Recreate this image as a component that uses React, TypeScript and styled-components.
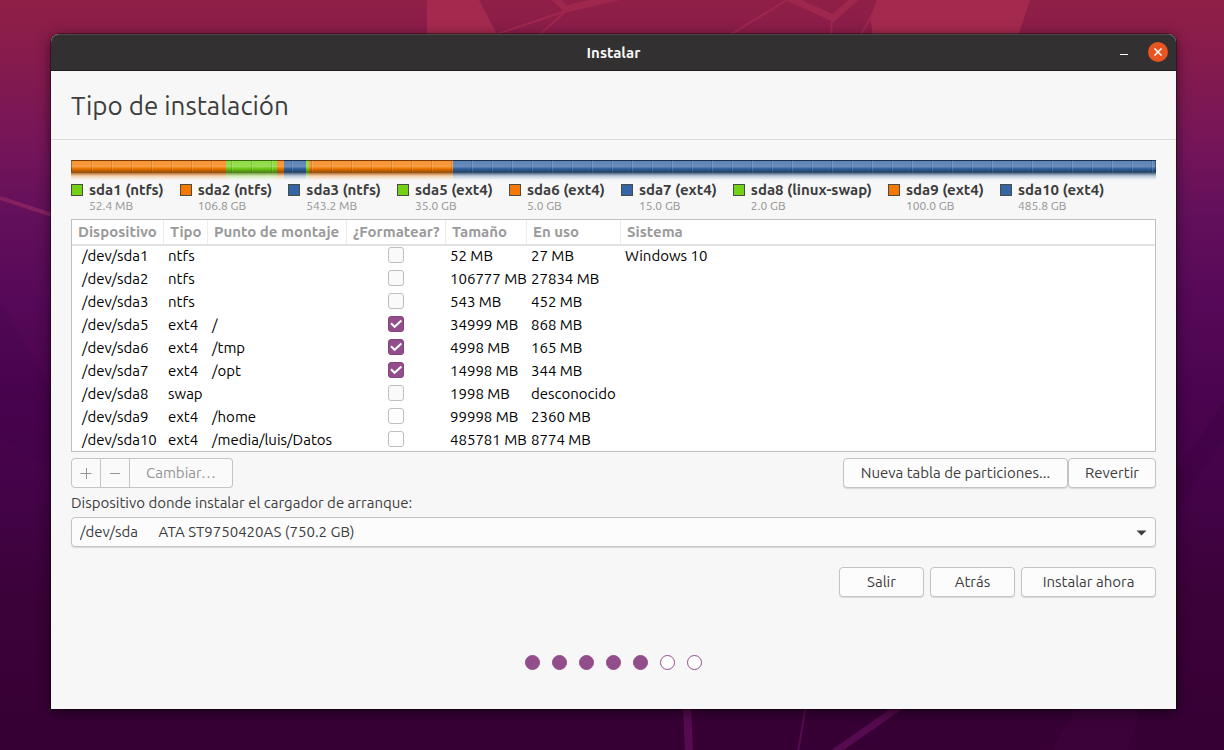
import React, { useState } from "react";
import styled, { createGlobalStyle } from "styled-components";

const ORANGE = "#f57900";
const GREEN = "#73d216";
const BLUE = "#3465a4";

const GlobalStyle = createGlobalStyle`
  *, *::before, *::after { box-sizing: border-box; }
  body {
    margin: 0;
    font-family: Ubuntu, "Noto Sans", sans-serif;
    font-size: 15px;
    line-height: 20px;
    color: #3d3d3d;
  }
  button, input, select { font: inherit; color: inherit; margin: 0; }
`;

const Desktop = styled.div`
  position: relative;
  min-height: 100vh;
  padding: 34px 48px 41px 51px;
  background: linear-gradient(
    #8f1f46 0%, #861b4d 8%, #74155a 20%, #64105b 28%, #560958 40%,
    #4b044f 53%, #430346 67%, #3b0239 80%, #360034 100%
  );
`;

const Wallpaper = styled.svg`
  position: absolute;
  inset: 0;
  width: 100%;
  height: 100%;
`;

const Window = styled.main`
  position: relative;
  display: flex;
  flex-direction: column;
  background: #f7f7f7;
  border-radius: 8px 8px 0 0;
  box-shadow: 0 0 0 1px rgba(0, 0, 0, 0.35), 0 3px 14px rgba(0, 0, 0, 0.55);
`;

const TitleBar = styled.header`
  display: grid;
  grid-template-columns: 1fr auto 1fr;
  align-items: center;
  height: 37px;
  padding: 0 8px;
  background: #323030;
  border-top: 1px solid #4c4a48;
  border-bottom: 1px solid #1d1b1b;
  border-radius: 8px 8px 0 0;
`;

const WindowTitle = styled.span`
  grid-column: 2;
  font-weight: 700;
  color: #f7f7f7;
`;

const WindowControls = styled.div`
  display: flex;
  justify-content: flex-end;
  gap: 14px;
  padding-bottom: 2px;
`;

const ControlButton = styled.button<{ $close?: boolean }>`
  display: flex;
  align-items: center;
  justify-content: center;
  width: 20px;
  height: 20px;
  padding: 0;
  border: 0;
  border-radius: 50%;
  color: #fff;
  background: ${(p) => (p.$close ? "#e95420" : "transparent")};
`;

const PageHeader = styled.div`
  padding: 19px 20px 17px;
  border-bottom: 1px solid #dcdcdc;
`;

const PageTitle = styled.h1`
  margin: 0;
  font-size: 26px;
  line-height: 32px;
  font-weight: 400;
`;

const Content = styled.div`
  display: flex;
  flex-direction: column;
  padding: 20px 20px 39px;
`;

const DiskBar = styled.div`
  position: relative;
  display: flex;
  height: 20px;
  &::after {
    content: "";
    position: absolute;
    inset: 0 0 7px;
    border: 1px solid rgba(0, 0, 0, 0.3);
    border-bottom-color: rgba(0, 0, 0, 0.4);
    background:
      repeating-linear-gradient(
        90deg, transparent 0 18px, rgba(0, 0, 0, 0.12) 18px 19px, rgba(255, 255, 255, 0.12) 19px 20px
      ) 1px 0,
      linear-gradient(
        rgba(255, 255, 255, 0.2) 0%, rgba(255, 255, 255, 0.26) 50%,
        rgba(0, 0, 0, 0.05) 70%, rgba(0, 0, 0, 0.35) 100%
      );
  }
`;

const Segment = styled.div<{ $color: string; $size: number }>`
  flex: ${(p) => p.$size} 1 0;
  background:
    linear-gradient(transparent 13px, rgba(120, 110, 100, 0.5) 13px, rgba(247, 247, 247, 0.7) 16px, #f7f7f7 20px),
    ${(p) => p.$color};
`;

const Legend = styled.ul`
  display: flex;
  gap: 16px;
  margin: 0;
  padding: 0 0 8px;
  list-style: none;
`;

const LegendItem = styled.li`
  display: grid;
  grid-template-columns: 12px auto;
  column-gap: 6px;
  align-items: center;
  white-space: nowrap;
`;

const Swatch = styled.span<{ $color: string }>`
  width: 12px;
  height: 12px;
  border: 1px solid #4a4a46;
  background: ${(p) => p.$color};
`;

const LegendName = styled.strong`
  line-height: 20px;
`;

const LegendSize = styled.small`
  grid-column: 2;
  font-size: 12px;
  line-height: 11px;
  color: #929292;
`;

const TableFrame = styled.div`
  border: 1px solid #bfbfbf;
  background: #fff;
`;

const Table = styled.table`
  width: 100%;
  table-layout: fixed;
  border-collapse: separate;
  border-spacing: 0;
  color: #000;
`;

const Col = styled.col<{ $width?: number }>`
  width: ${(p) => (p.$width ? p.$width + "px" : "auto")};
`;

const HeadRow = styled.tr`
  box-shadow: 0 2px 0 #e2e2e2;
`;

const HeadCell = styled.th`
  height: 24px;
  padding: 0 0 0 6px;
  text-align: left;
  white-space: nowrap;
  color: #9a9a9a;
  &:not(:last-child) { border-right: 1px solid #ededed; }
`;

const Cell = styled.td<{ $center?: boolean }>`
  height: 23px;
  padding: ${(p) => (p.$center ? "0 1px 1px 0" : "0 0 0 4px")};
  line-height: 23px;
  white-space: nowrap;
  &:first-child { padding-left: 10px; }
`;

const CheckBox = styled.input`
  appearance: none;
  display: block;
  width: 16px;
  height: 16px;
  border: 1px solid #bdbdbd;
  border-radius: 3px;
  background: #fff;
  &:disabled { background: #fafafa; }
  &:checked { background: #924d8b; border-color: #85437f; }
`;

const CheckWrap = styled.label`
  position: relative;
  display: block;
  width: 16px;
  margin: 0 auto;
  svg { position: absolute; inset: 0; display: none; pointer-events: none; }
  input:checked + svg { display: block; }
`;

const ButtonRow = styled.div<{ $gap: number }>`
  display: flex;
  justify-content: flex-end;
  gap: ${(p) => p.$gap}px;
`;

const ActionBar = styled.div`
  display: flex;
  justify-content: space-between;
  margin: 6px 0 5px;
`;

const Button = styled.button<{ $padding?: number; $minWidth?: number }>`
  height: 30px;
  min-width: ${(p) => p.$minWidth ?? 0}px;
  padding: 0 ${(p) => p.$padding ?? 16}px;
  border: 1px solid #c4c4c4;
  border-radius: 4px;
  background: #fcfcfc;
  box-shadow: 0 1px 1px rgba(0, 0, 0, 0.12);
`;

const LinkedButtons = styled.div`
  display: flex;
  button {
    display: flex;
    align-items: center;
    justify-content: center;
    box-shadow: none;
    border-radius: 0;
    background: #fafafa;
    color: #949494;
  }
  button + button { border-left: 0; }
  button:first-child { border-radius: 4px 0 0 4px; }
  button:last-child { border-radius: 0 4px 4px 0; }
`;

const SelectLabel = styled.label`
  margin-bottom: 4px;
`;

const SelectBox = styled.div`
  position: relative;
  margin-bottom: 20px;
  svg { position: absolute; right: 9px; top: 13px; pointer-events: none; }
`;

const Select = styled.select`
  appearance: none;
  display: block;
  width: 100%;
  height: 30px;
  padding: 0 32px 0 8px;
  border: 1px solid #c4c4c4;
  border-radius: 4px;
  background: #fcfcfc;
  box-shadow: 0 1px 1px rgba(0, 0, 0, 0.12);
`;

const Steps = styled.div`
  display: flex;
  justify-content: center;
  gap: 12px;
  margin-top: 58px;
`;

const Step = styled.span<{ $done: boolean }>`
  width: 15px;
  height: 15px;
  border: 1px solid #924d8b;
  border-radius: 50%;
  background: ${(p) => (p.$done ? "#924d8b" : "#fff")};
`;

type Partition = {
  name: string;
  fs: string;
  kind: string;
  label: string;
  gb: number;
  color: string;
  mount?: string;
  format?: boolean;
  canFormat?: boolean;
  size: string;
  used: string;
  system?: string;
};

const partitions: Partition[] = [
  { name: "sda1", fs: "ntfs", kind: "ntfs", label: "52.4 MB", gb: 0.05, color: GREEN, size: "52 MB", used: "27 MB", system: "Windows 10" },
  { name: "sda2", fs: "ntfs", kind: "ntfs", label: "106.8 GB", gb: 106.8, color: ORANGE, size: "106777 MB", used: "27834 MB" },
  { name: "sda3", fs: "ntfs", kind: "ntfs", label: "543.2 MB", gb: 0.54, color: BLUE, size: "543 MB", used: "452 MB" },
  { name: "sda5", fs: "ext4", kind: "ext4", label: "35.0 GB", gb: 35, color: GREEN, mount: "/", format: true, canFormat: true, size: "34999 MB", used: "868 MB" },
  { name: "sda6", fs: "ext4", kind: "ext4", label: "5.0 GB", gb: 5, color: ORANGE, mount: "/tmp", format: true, canFormat: true, size: "4998 MB", used: "165 MB" },
  { name: "sda7", fs: "ext4", kind: "ext4", label: "15.0 GB", gb: 15, color: BLUE, mount: "/opt", format: true, canFormat: true, size: "14998 MB", used: "344 MB" },
  { name: "sda8", fs: "linux-swap", kind: "swap", label: "2.0 GB", gb: 2, color: GREEN, size: "1998 MB", used: "desconocido" },
  { name: "sda9", fs: "ext4", kind: "ext4", label: "100.0 GB", gb: 100, color: ORANGE, mount: "/home", canFormat: true, size: "99998 MB", used: "2360 MB" },
  { name: "sda10", fs: "ext4", kind: "ext4", label: "485.8 GB", gb: 485.8, color: BLUE, mount: "/media/luis/Datos", canFormat: true, size: "485781 MB", used: "8774 MB" },
];

const columns: { title: string; width?: number }[] = [
  { title: "Dispositivo", width: 92 },
  { title: "Tipo", width: 44 },
  { title: "Punto de montaje", width: 139 },
  { title: "¿Formatear?", width: 99 },
  { title: "Tamaño", width: 81 },
  { title: "En uso", width: 94 },
  { title: "Sistema" },
];

function FormatCheck({ partition }: { partition: Partition }) {
  const [checked, setChecked] = useState(!!partition.format);
  return (
    <CheckWrap>
      <CheckBox
        type="checkbox"
        aria-label={`Formatear /dev/${partition.name}`}
        checked={checked}
        disabled={!partition.canFormat}
        onChange={(e) => setChecked(e.target.checked)}
      />
      <svg width="16" height="16" viewBox="0 0 16 16" fill="none" stroke="#fff" strokeWidth="2">
        <path d="M3 7.2l3.6 3.6L13.4 4.4" />
      </svg>
    </CheckWrap>
  );
}

function Background() {
  return (
    <Wallpaper viewBox="0 0 1224 750" preserveAspectRatio="none" aria-hidden="true">
      <g fill="#a4294e">
        <path d="M427 0H479L498 36H427Z" />
        <path d="M877 0H1030L1018 36H873L870 17Z" />
      </g>
      <g fill="none" stroke="#9f274e">
        <path d="M554-3L566 9L622-4" strokeWidth="7" />
        <path d="M566 11L494 35M566 11L538 36" strokeWidth="2" />
        <path d="M780-6L833 18L858-4" strokeWidth="7" />
        <path d="M787 0L728 36M832 20L831 36M871 17L860 36" strokeWidth="2" />
      </g>
      <path d="M0 198L52 215" stroke="#852160" strokeWidth="4" />
      <path d="M0 300L60 405V475L0 437Z" fill="#2d0040" opacity="0.1" />
      <path d="M1224 402L1170 480V520L1224 440Z" fill="#2d0030" opacity="0.14" />
      <g fill="none" stroke="#560b50">
        <path d="M687 705L689 752" strokeWidth="8" />
        <path d="M806 705L798 752" strokeWidth="2" />
        <path d="M902 705L832 754" strokeWidth="7" />
      </g>
      <path d="M1075 709H1140L1128 750H1052Z" fill="#560b50" opacity="0.15" />
    </Wallpaper>
  );
}

export default function App() {
  return (
    <Desktop>
      <GlobalStyle />
      <Background />
      <Window>
        <TitleBar>
          <WindowTitle>Instalar</WindowTitle>
          <WindowControls>
            <ControlButton aria-label="Minimizar">
              <svg width="20" height="20" viewBox="0 0 20 20">
                <path d="M6 12.5H14" stroke="currentColor" />
              </svg>
            </ControlButton>
            <ControlButton $close aria-label="Cerrar">
              <svg width="20" height="20" viewBox="0 0 20 20">
                <path d="M6.5 6.5L13.5 13.5M13.5 6.5L6.5 13.5" stroke="currentColor" strokeWidth="1.5" />
              </svg>
            </ControlButton>
          </WindowControls>
        </TitleBar>

        <PageHeader>
          <PageTitle>Tipo de instalación</PageTitle>
        </PageHeader>

        <Content>
          <DiskBar>
            {partitions.map((p) => (
              <Segment key={p.name} $color={p.color} $size={p.gb} />
            ))}
          </DiskBar>
          <Legend>
            {partitions.map((p) => (
              <LegendItem key={p.name}>
                <Swatch $color={p.color} />
                <LegendName>{`${p.name} (${p.fs})`}</LegendName>
                <LegendSize>{p.label}</LegendSize>
              </LegendItem>
            ))}
          </Legend>

          <TableFrame>
            <Table>
              <colgroup>
                {columns.map((c) => (
                  <Col key={c.title} $width={c.width} />
                ))}
              </colgroup>
              <thead>
                <HeadRow>
                  {columns.map((c) => (
                    <HeadCell key={c.title}>{c.title}</HeadCell>
                  ))}
                </HeadRow>
              </thead>
              <tbody>
                {partitions.map((p) => (
                  <tr key={p.name}>
                    <Cell>{`/dev/${p.name}`}</Cell>
                    <Cell>{p.kind}</Cell>
                    <Cell>{p.mount}</Cell>
                    <Cell $center>
                      <FormatCheck partition={p} />
                    </Cell>
                    <Cell>{p.size}</Cell>
                    <Cell>{p.used}</Cell>
                    <Cell>{p.system}</Cell>
                  </tr>
                ))}
              </tbody>
            </Table>
          </TableFrame>

          <ActionBar>
            <LinkedButtons>
              <Button $padding={8} disabled aria-label="Añadir">
                <svg width="12" height="12" viewBox="0 0 12 12">
                  <path d="M0.5 6.5H11.5M6.5 1V12" stroke="currentColor" />
                </svg>
              </Button>
              <Button $padding={8} disabled aria-label="Quitar">
                <svg width="12" height="12" viewBox="0 0 12 12">
                  <path d="M1 6.5H11" stroke="currentColor" />
                </svg>
              </Button>
              <Button disabled>Cambiar…</Button>
            </LinkedButtons>
            <ButtonRow $gap={0}>
              <Button $minWidth={225}>Nueva tabla de particiones...</Button>
              <Button>Revertir</Button>
            </ButtonRow>
          </ActionBar>

          <SelectLabel htmlFor="boot-device">Dispositivo donde instalar el cargador de arranque:</SelectLabel>
          <SelectBox>
            <Select id="boot-device">
              <option>{"/dev/sda\u00a0\u00a0\u00a0\u00a0\u00a0\u00a0ATA ST9750420AS (750.2 GB)"}</option>
            </Select>
            <svg width="11" height="6" viewBox="0 0 11 6">
              <path d="M0.5 0.5H10.5L5.5 5.5Z" fill="#3d3d3d" />
            </svg>
          </SelectBox>

          <ButtonRow $gap={6}>
            <Button $minWidth={85}>Salir</Button>
            <Button $minWidth={85}>Atrás</Button>
            <Button $minWidth={135}>Instalar ahora</Button>
          </ButtonRow>

          <Steps role="img" aria-label="Paso 5 de 7">
            {[1, 2, 3, 4, 5, 6, 7].map((n) => (
              <Step key={n} $done={n <= 5} />
            ))}
          </Steps>
        </Content>
      </Window>
    </Desktop>
  );
}
